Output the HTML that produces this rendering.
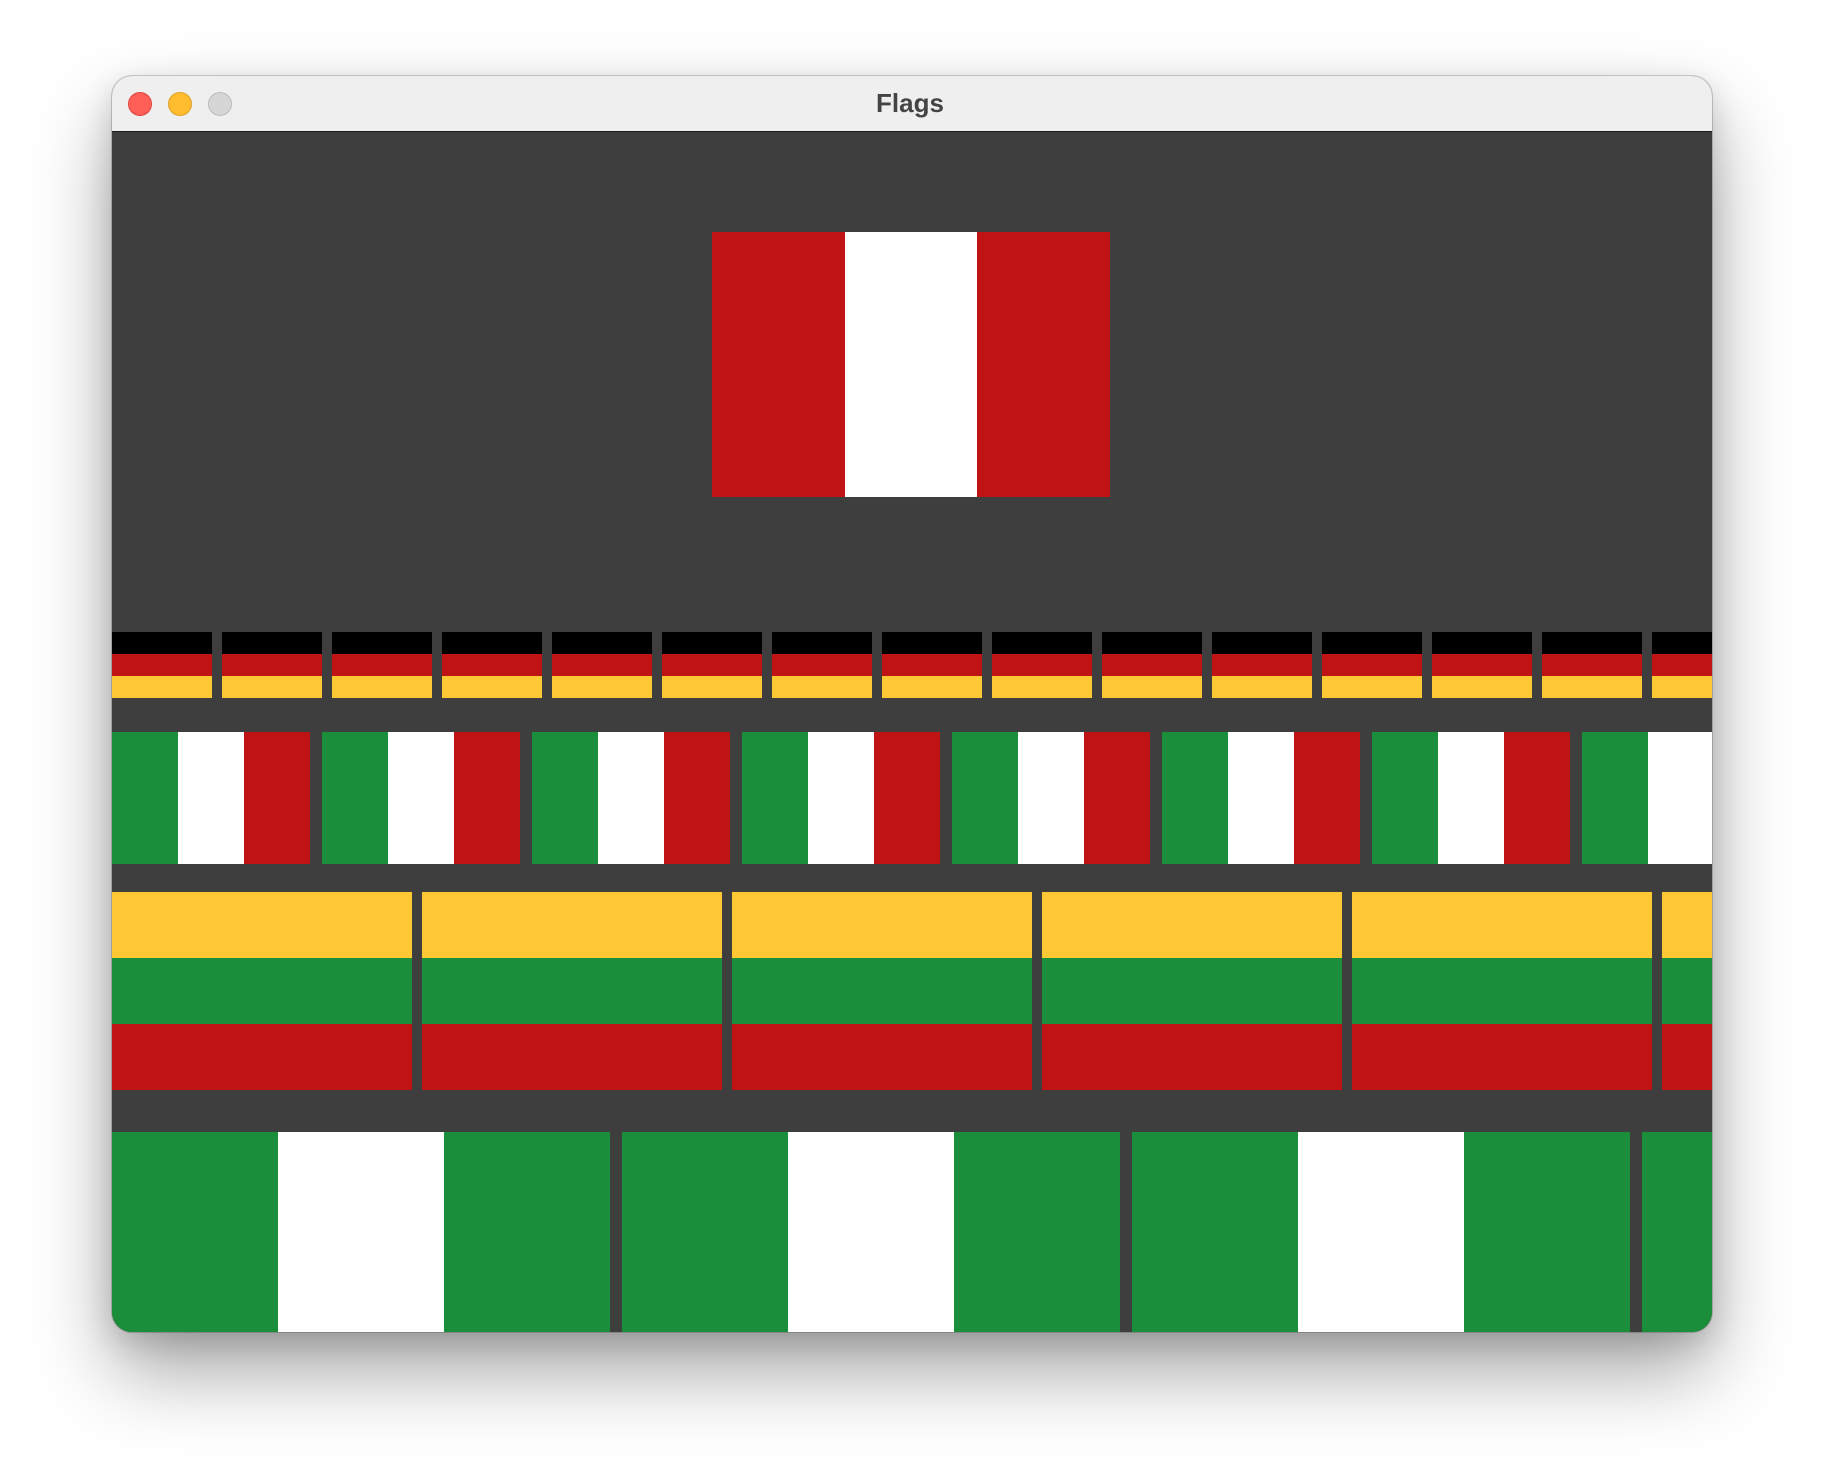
<!DOCTYPE html>
<html><head><meta charset="utf-8"><style>
html,body{margin:0;padding:0;width:1824px;height:1480px;background:#fff;overflow:hidden;font-family:"Liberation Sans",sans-serif}
.win{position:absolute;left:112px;top:76px;width:1600px;height:1256px;border-radius:20px;background:#3e3e3e;overflow:hidden;box-shadow:0 0 0 1px rgba(0,0,0,0.18),0 40px 80px rgba(0,0,0,0.35),0 10px 30px rgba(0,0,0,0.15)}
.tb{position:absolute;left:0;top:0;width:1600px;height:55px;background:#efefef;border-bottom:1px solid #1a1a1a}
.dot{position:absolute;top:16px;width:24px;height:24px;border-radius:50%;box-sizing:border-box}
.title{position:absolute;left:-2px;width:1600px;top:12px;text-align:center;font-weight:bold;font-size:26px;color:#444}
.c{position:absolute;left:0;top:56px;width:1600px;height:1200px;overflow:hidden}
.f{position:absolute;display:flex}
.h{flex-direction:column}
.f>div{flex:1}
.R{background:#c01414}.W{background:#fff}.G{background:#1a8e3b}.Y{background:#fec734}.K{background:#000}
</style></head><body>
<div class="win">
<div class="tb">
<div class="dot" style="left:16px;background:#fe5f57;border:1px solid #e0443e"></div>
<div class="dot" style="left:56px;background:#febc2e;border:1px solid #dea123"></div>
<div class="dot" style="left:96px;background:#d6d6d6;border:1px solid #bcbcbc"></div>
<div class="title">Flags</div>
</div>
<div class="c">
<div class="f" style="left:600px;top:100px;width:398px;height:265px"><div class="R"></div><div class="W"></div><div class="R"></div></div>
<div id="rows"></div>
</div>
</div>
<script>
var rows=document.getElementById('rows'),h='';
for(var i=0;i<15;i++)h+='<div class="f h" style="left:'+(i*110)+'px;top:500px;width:100px;height:66px"><div class="K"></div><div class="R"></div><div class="Y"></div></div>';
for(var i=0;i<8;i++)h+='<div class="f" style="left:'+(i*210)+'px;top:600px;width:198px;height:132px"><div class="G"></div><div class="W"></div><div class="R"></div></div>';
for(var i=0;i<6;i++)h+='<div class="f h" style="left:'+(i*310)+'px;top:760px;width:300px;height:198px"><div class="Y"></div><div class="G"></div><div class="R"></div></div>';
for(var i=0;i<4;i++)h+='<div class="f" style="left:'+(i*510)+'px;top:1000px;width:498px;height:333px"><div class="G"></div><div class="W"></div><div class="G"></div></div>';
rows.innerHTML=h;
</script>
</body></html>
